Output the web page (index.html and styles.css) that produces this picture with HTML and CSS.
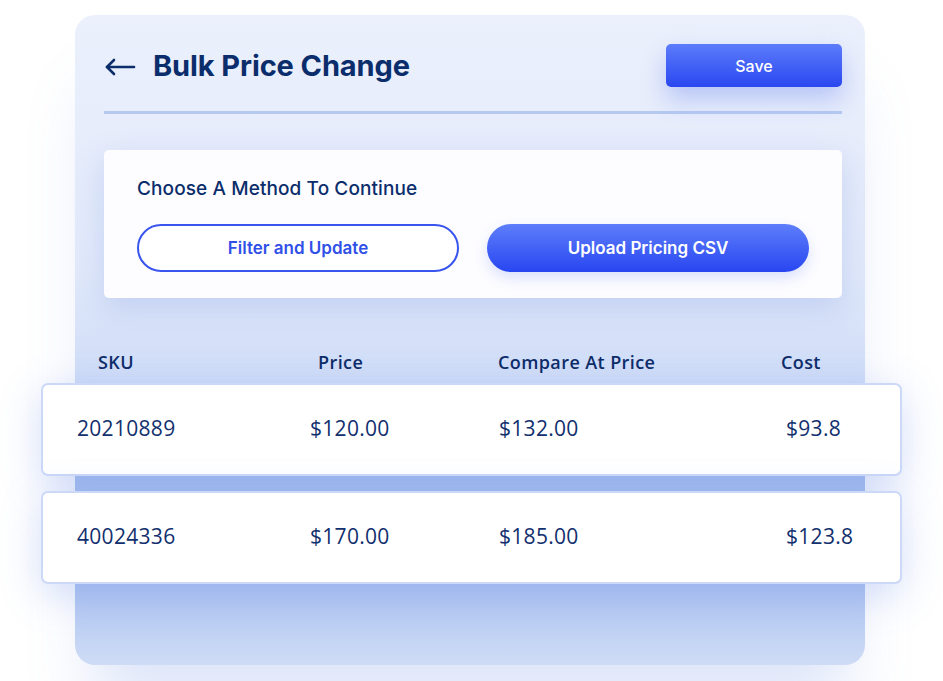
FILE: index.html
```html
<!DOCTYPE html>
<html lang="en">
<head>
  <meta charset="UTF-8" />
  <title>Bulk Price Change</title>
  <link rel="stylesheet" href="styles.css">
</head>
<body>
  <div class="panel">
    <!-- Header -->
    <header class="panel-header">
      <div class="title-group">
        <svg class="back-icon" width="32" height="18" viewBox="0 0 32 18" fill="none" stroke="#0b2d6b" stroke-width="2.6" stroke-linecap="round" stroke-linejoin="round">
          <path d="M30 9H3"/>
          <path d="M10 2L3 9l7 7"/>
        </svg>
        <h1>Bulk Price Change</h1>
      </div>
      <button class="save-btn">Save</button>
    </header>
    <div class="header-divider"></div>

    <!-- Method Card -->
    <section class="method-card">
      <h2>Choose A Method To Continue</h2>
      <div class="method-actions">
        <button class="pill-btn outline">Filter and Update</button>
        <button class="pill-btn solid">Upload Pricing CSV</button>
      </div>
    </section>

    <!-- Price Table -->
    <div class="table-head">
      <span>SKU</span>
      <span>Price</span>
      <span>Compare At Price</span>
      <span>Cost</span>
    </div>
    <div class="table-row">
      <span>20210889</span>
      <span>$120.00</span>
      <span>$132.00</span>
      <span>$93.8</span>
    </div>
    <div class="table-row">
      <span>40024336</span>
      <span>$170.00</span>
      <span>$185.00</span>
      <span>$123.8</span>
    </div>
  </div>
</body>
</html>
```

FILE: styles.css
```css
/* Reset & Base */
* {
  margin: 0;
  padding: 0;
  box-sizing: border-box;
}

body {
  font-family: 'Inter', 'Liberation Sans', sans-serif;
  background: #ffffff;
  width: 943px;
  height: 681px;
  overflow: hidden;
}

/* Panel */
.panel {
  width: 790px;
  height: 650px;
  margin: 15px 0 0 75px;
  padding: 29px 23px 0 29px;
  border-radius: 20px;
  background: linear-gradient(180deg, #ebf0fc 0%, #e1e9fa 40%, #cddbf7 58%, #a9c0ef 70%, #aec4f0 88%, #cfdcf6 100%);
  box-shadow: 0 60px 60px -20px rgba(120, 150, 230, 0.25);
}

/* Header */
.panel-header {
  display: flex;
  align-items: center;
  justify-content: space-between;
  height: 43px;
}

.title-group {
  display: flex;
  align-items: center;
  gap: 17px;
}

.back-icon {
  display: block;
  margin-top: 2px;
}

h1 {
  font-size: 29px;
  font-weight: 700;
  color: #0b2d6b;
  letter-spacing: -0.1px;
}

.save-btn {
  width: 176px;
  height: 43px;
  border: none;
  border-radius: 5px;
  background: linear-gradient(180deg, #5c7cfb 0%, #2a47f0 100%);
  color: #fff;
  font-family: inherit;
  font-size: 16px;
  font-weight: 500;
  box-shadow: 0 12px 24px rgba(70, 100, 240, 0.3);
}

.header-divider {
  height: 3px;
  margin-top: 24px;
  background: #b6caf1;
}

/* Method Card */
.method-card {
  margin-top: 36px;
  height: 148px;
  padding: 28px 33px 0;
  background: #fdfdff;
  border-radius: 5px;
  box-shadow: 0 10px 30px rgba(110, 140, 225, 0.25);
}

.method-card h2 {
  font-size: 19px;
  font-weight: 500;
  line-height: 22px;
  color: #0b2d6b;
  letter-spacing: 0.1px;
}

.method-actions {
  display: flex;
  gap: 28px;
  margin-top: 24px;
}

.pill-btn {
  width: 322px;
  height: 48px;
  border-radius: 24px;
  font-family: inherit;
  font-size: 17px;
  font-weight: 600;
}

.pill-btn.outline {
  background: #fff;
  border: 2px solid #3a55ee;
  color: #3050e8;
}

.pill-btn.solid {
  border: none;
  background: linear-gradient(180deg, #5e7efb 0%, #2846f0 100%);
  color: #fff;
  box-shadow: 0 6px 14px rgba(60, 90, 240, 0.18);
}

/* Table */
.table-head,
.table-row {
  display: grid;
  margin: 0 -60px 0 -63px;
  color: #0d2c69;
  font-family: 'Open Sans', sans-serif;
}

.table-head {
  margin-top: 52px;
  margin-bottom: 9px;
  padding-left: 57px;
  grid-template-columns: 220px 180px 283px auto;
  font-size: 18px;
  font-weight: 600;
  line-height: 24px;
  letter-spacing: 0.4px;
}

.table-row {
  height: 93px;
  align-items: center;
  padding: 0 0 4px 34px;
  grid-template-columns: 233px 189px 287px auto;
  background: #fff;
  border: 2px solid #cbd8f8;
  border-radius: 7px;
  font-size: 21px;
  letter-spacing: 0.3px;
  color: #12306e;
  box-shadow: 0 10px 40px rgba(100, 135, 230, 0.28);
}

.table-row + .table-row {
  margin-top: 15px;
}
```
